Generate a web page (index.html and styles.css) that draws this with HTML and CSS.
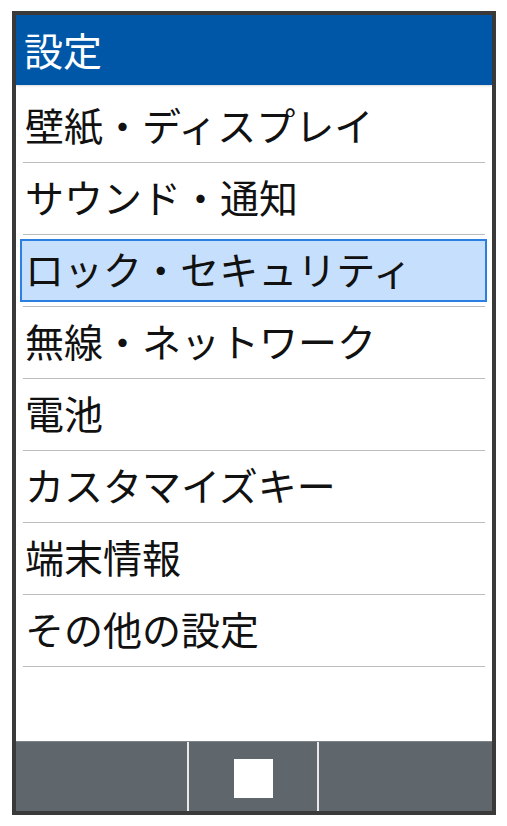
FILE: index.html
```html
<!DOCTYPE html>
<html lang="ja">
<head>
    <meta charset="UTF-8" />
    <meta name="viewport" content="width=device-width, initial-scale=1.0" />
    <title>設定</title>
    <link rel="stylesheet" href="styles.css">
</head>
<body>
    <div class="phone">
        <header class="title-bar">
            <h1>設定</h1>
        </header>
        <ul class="menu">
            <li><span class="label">壁紙・ディスプレイ</span></li>
            <li><span class="label">サウンド・通知</span></li>
            <li class="selected"><span class="label">ロック・セキュリティ</span></li>
            <li><span class="label">無線・ネットワーク</span></li>
            <li><span class="label">電池</span></li>
            <li><span class="label">カスタマイズキー</span></li>
            <li><span class="label">端末情報</span></li>
            <li><span class="label">その他の設定</span></li>
        </ul>
        <footer class="soft-keys">
            <div class="key key-left"></div>
            <div class="key key-center"><span class="square"></span></div>
            <div class="key key-right"></div>
        </footer>
    </div>
</body>
</html>
```

FILE: styles.css
```css
/* Reset */
body,
h1,
ul,
li {
  margin: 0;
  padding: 0;
}

* {
  box-sizing: border-box;
}

body {
  font-family: 'Noto Sans CJK JP', 'Noto Sans', sans-serif;
  color: #111;
  background-color: #fff;
}

.phone {
  width: 484px;
  height: 804px;
  margin: 11px 0 0 12px;
  border: 4px solid #3a3a3a;
  display: flex;
  flex-direction: column;
  background-color: #fff;
}

.title-bar {
  height: 70px;
  background-color: #0057a8;
  color: #fff;
  display: flex;
  align-items: center;
  padding-left: 8px;
  box-shadow: 0 1px 2px rgba(0, 0, 0, 0.15);
  position: relative;
}

.title-bar h1 {
  font-size: 39px;
  font-weight: 400;
  line-height: 1;
  margin-top: -2px;
}

.menu {
  flex: 1;
  list-style: none;
  padding: 6px 7px 0 7px;
}

.menu li {
  height: 72px;
  border-bottom: 1px solid #b9bdbe;
  display: flex;
  padding: 4px 0 4px 0;
}

.label {
  flex: 1;
  display: flex;
  align-items: center;
  margin: 0 -2px 0 -3px;
  padding: 0 0 4px 3px;
  border: 2px solid transparent;
  font-size: 39px;
  line-height: 1;
  white-space: nowrap;
}

.menu li.selected .label {
  background-color: #c6dffc;
  border-color: #2b7fe0;
}

.soft-keys {
  height: 70px;
  display: flex;
  background-color: #5f676d;
  border-top: 1px solid #7d8489;
}

.key {
  height: 100%;
}

.key-left {
  width: 173px;
  border-right: 2px solid #e6e8e9;
}

.key-center {
  width: 130px;
  border-right: 2px solid #e6e8e9;
  display: flex;
  justify-content: center;
  padding-top: 17px;
}

.key-right {
  flex: 1;
}

.square {
  width: 39px;
  height: 39px;
  background-color: #fff;
}
```
